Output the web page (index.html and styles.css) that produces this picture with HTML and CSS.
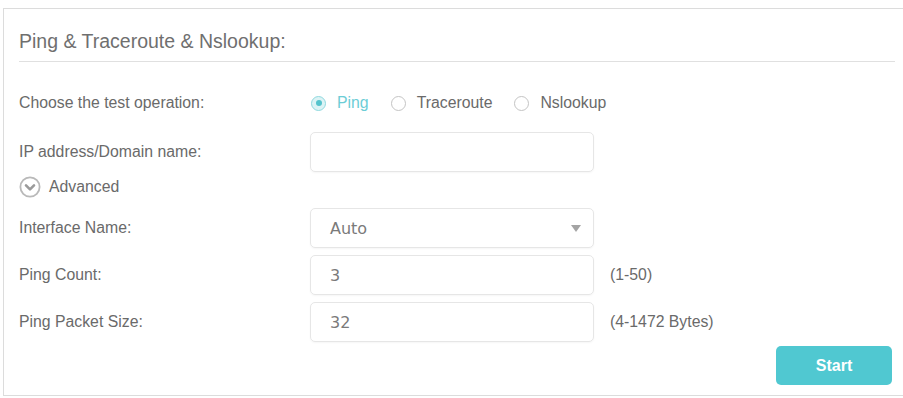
FILE: index.html
```html
<!DOCTYPE html>
<html lang="en">
<head>
  <meta charset="UTF-8" />
  <meta name="viewport" content="width=device-width, initial-scale=1.0"/>
  <title>Ping &amp; Traceroute &amp; Nslookup</title>
  <link rel="stylesheet" href="styles.css">
</head>
<body>
  <div class="card">
    <div class="card-title">Ping &amp; Traceroute &amp; Nslookup:</div>

    <div class="row row-radio">
      <div class="label">Choose the test operation:</div>
      <div class="radios">
        <label class="radio checked"><span class="dot"></span>Ping</label>
        <label class="radio"><span class="dot"></span>Traceroute</label>
        <label class="radio"><span class="dot"></span>Nslookup</label>
      </div>
    </div>

    <div class="row row-ip">
      <div class="label">IP address/Domain name:</div>
      <div class="field"></div>
    </div>

    <div class="advanced">
      <svg class="adv-icon" width="22" height="22" viewBox="0 0 22 22">
        <circle cx="11" cy="11" r="9.6" fill="none" stroke="#b9b9b9" stroke-width="1.8"/>
        <path d="M7 9.3 L11 13.3 L15 9.3" fill="none" stroke="#9a9a9a" stroke-width="2.6" stroke-linecap="round" stroke-linejoin="round"/>
      </svg>
      <span>Advanced</span>
    </div>

    <div class="row row-first">
      <div class="label">Interface Name:</div>
      <div class="field select">Auto<span class="caret"></span></div>
    </div>

    <div class="row">
      <div class="label">Ping Count:</div>
      <div class="field">3</div>
      <div class="hint">(1-50)</div>
    </div>

    <div class="row">
      <div class="label">Ping Packet Size:</div>
      <div class="field">32</div>
      <div class="hint">(4-1472 Bytes)</div>
    </div>

    <div class="actions">
      <button class="btn">Start</button>
    </div>
  </div>
</body>
</html>
```

FILE: styles.css
```css
:root {
  --teal: #50c8d1;
  --text: #6a6a6a;
  --line: #e0e0e0;
}

body {
  margin: 0;
  background: #fff;
  font-family: "Liberation Sans", Arial, sans-serif;
  color: var(--text);
}

.card {
  margin: 8px 0 0 3px;
  border: 1px solid #dcdcdc;
  border-right: none;
  padding: 0 8px 10px 15px;
}

.card-title {
  font-size: 19.5px;
  line-height: 24px;
  padding: 20px 0 8px;
  border-bottom: 1px solid var(--line);
  color: #6f6f6f;
}

.row {
  display: flex;
  align-items: center;
  height: 40px;
  margin-top: 7px;
  font-size: 15.8px;
}

.row-radio {
  height: 38px;
  margin-top: 22px;
}

.row-ip {
  margin-top: 10px;
}

.row-first {
  margin-top: 6px;
}

.label {
  width: 291px;
  flex-shrink: 0;
}

.radios {
  display: flex;
  align-items: center;
}

.radio {
  display: flex;
  align-items: center;
  margin-right: 21px;
}

.radio .dot {
  width: 13px;
  height: 13px;
  border: 1px solid #c4c4c4;
  border-radius: 50%;
  margin: 0 11px 0 1px;
  box-sizing: content-box;
  position: relative;
}

.radio.checked {
  color: #6ccdd6;
}

.radio.checked .dot {
  border-color: #8fd9df;
  background: #dcf3f5;
}

.radio.checked .dot::after {
  content: "";
  position: absolute;
  left: 3.5px;
  top: 3.5px;
  width: 6px;
  height: 6px;
  border-radius: 50%;
  background: #55c3cc;
}

.field {
  width: 284px;
  height: 40px;
  box-sizing: border-box;
  border: 1px solid #e6e6e6;
  border-radius: 5px;
  box-shadow: 0 1px 2px rgba(0, 0, 0, 0.04);
  padding-left: 19px;
  display: flex;
  align-items: center;
  font-family: "DejaVu Sans", Verdana, sans-serif;
  font-size: 16px;
  color: #7a7a7a;
  position: relative;
}

.select .caret {
  position: absolute;
  right: 12px;
  top: 16px;
  width: 0;
  height: 0;
  border-left: 5px solid transparent;
  border-right: 5px solid transparent;
  border-top: 7px solid #a4a4a4;
}

.hint {
  margin-left: 16px;
}

.advanced {
  display: flex;
  align-items: center;
  height: 30px;
  font-size: 15.8px;
}

.adv-icon {
  margin: 0 8px 0 0;
}

.actions {
  display: flex;
  justify-content: flex-end;
  margin-top: 4px;
  padding-right: 3px;
}

.btn {
  width: 116px;
  height: 39px;
  border: none;
  border-radius: 5px;
  background: var(--teal);
  color: #fff;
  font-family: "Liberation Sans", Arial, sans-serif;
  font-size: 16px;
  font-weight: bold;
}
```
